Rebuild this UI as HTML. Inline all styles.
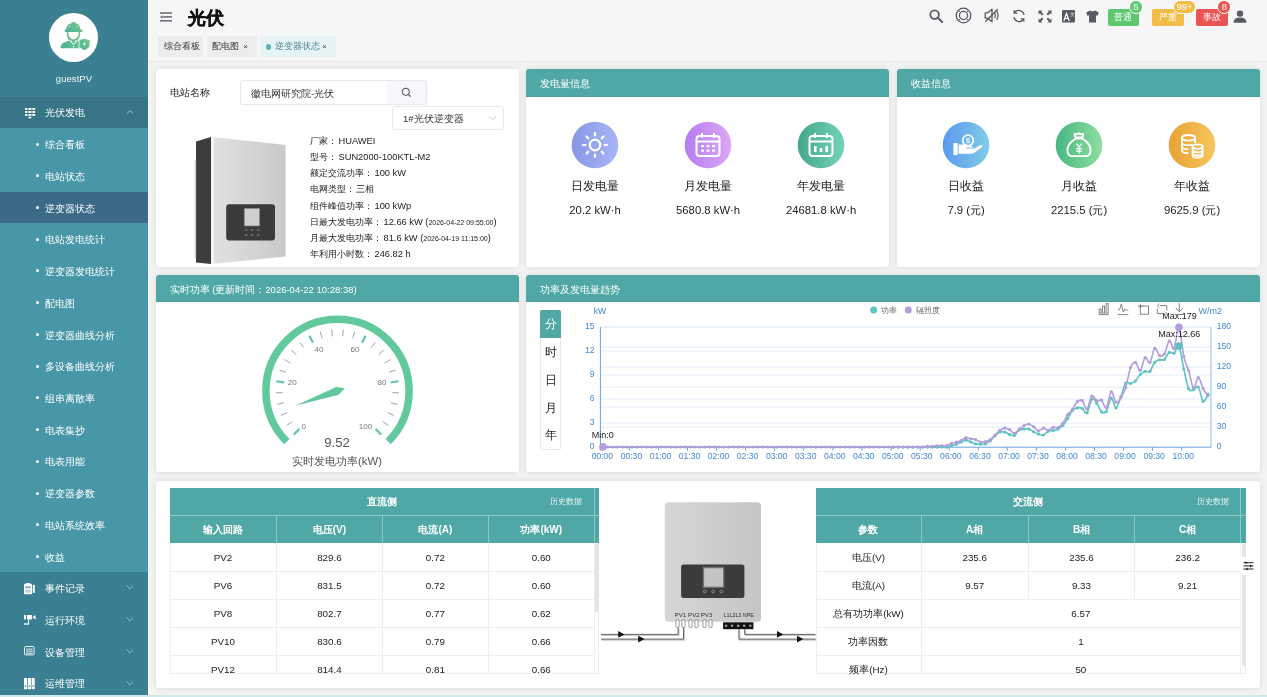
<!DOCTYPE html>
<html><head><meta charset="utf-8">
<style>
*{margin:0;padding:0;box-sizing:border-box}
html,body{width:1267px;height:697px;overflow:hidden;background:#f3f3f3;font-family:"Liberation Sans",sans-serif;color:#333}
.abs{position:absolute}
#side{position:absolute;left:0;top:0;width:148px;height:695px;background:#3b7f92;overflow:visible}
#avatar{position:absolute;left:49px;top:12.8px;width:49px;height:49px;border-radius:50%;background:#fff}
.uname{position:absolute;left:0;width:148px;top:72px;text-align:center;color:#eef5f7;font-size:9.6px;line-height:14px}
.mrow{position:absolute;left:0;width:148px;height:31.7px;color:#fff;font-size:9.5px;line-height:31.7px}
.mrow .t{position:absolute;left:45px;top:0.9px}
.mrow .dot{position:absolute;left:35.5px;top:14.3px;width:3px;height:3px;border-radius:50%;background:#fff}
.chev{position:absolute;left:126px;top:0;width:8px;height:31.7px}
#topbar{position:absolute;left:148px;top:0;width:1119px;height:61.5px;background:#f6f6f6;border-bottom:1px solid #e9e9e9}
.tab{position:absolute;top:36px;height:20.8px;line-height:21.5px;font-size:8.85px;color:#333;background:#ededed;padding-left:6px}
.panel{position:absolute;background:#fff;border-radius:3px;box-shadow:0 0 6px rgba(0,0,0,0.11)}
.ph{position:absolute;left:0;top:0;right:0;height:27.5px;background:#4fa8a5;border-radius:3px 3px 0 0;color:#fff;font-size:9.5px;line-height:30px;padding-left:14px;border-bottom:1px solid #4a9f9c}
.hicon{position:absolute;top:8px}
.badge{position:absolute;top:8.7px;height:16.9px;border-radius:2px;color:#fff;font-size:9px;line-height:17px;text-align:center}
.sup{position:absolute;height:14px;border-radius:7px;border:1px solid #fff;color:#fff;font-size:9.6px;line-height:12.5px;text-align:center}
</style></head><body>
<div id="root" style="position:absolute;left:0;top:0;width:1267px;height:697px;will-change:transform">
<div id="side">
<div id="avatar"><svg width="49" height="49" viewBox="0 0 49 49">
<defs><linearGradient id="wg" x1="0" y1="1" x2="1" y2="0"><stop offset="0" stop-color="#4fb197"/><stop offset="1" stop-color="#74ca86"/></linearGradient></defs>
<g fill="url(#wg)">
<path d="M17.2 16.6 Q17.4 11.4 22.4 10.2 Q22.6 9.1 24.6 9.1 Q26.6 9.1 26.9 10.2 Q31.2 11.4 31.2 16.6 H33.3 V19.1 H15.8 V16.6z"/>
<path d="M17.8 19.1 H19.3 Q19.2 25.8 24.5 26.6 Q29.8 25.8 29.7 19.1 H31.2 Q31.5 25 28.2 27.4 L30.5 28.4 L31.2 28.5 V35.2 H11.5 Q11.3 30.2 17.5 28.6 L20.8 27.4 Q17.5 25 17.8 19.1z"/>
<path d="M30.1 27 Q33.5 26.7 35.4 25.7 Q37.3 26.7 40.7 27 V31 Q40.6 35.3 35.4 37.2 Q30.2 35.3 30.1 31z"/>
</g>
<g fill="#fff">
<path d="M19.8 13.6 l1.2-.9 l.4 1.7z M29 13.6 l-1.2-.9 l-.4 1.7z"/>
<path d="M20.6 27.4 L24 31.7 L24.6 31.5 L21.8 27z M28.4 27.4 L25 31.7 L24.4 31.5 L27.2 27z"/>
<rect x="23.6" y="33.3" width="2" height=".9" rx=".4"/>
<path d="M35.9 28 L33.9 31.4 H35.3 L34.6 33.9 L36.8 30.3 H35.3z"/>
<path d="M29.6 27.2 h.9 v8.5 h-.9z" opacity=".9"/>
</g>
</svg></div>
<div class="uname">guestPV</div>
<div class="mrow" style="top:96.6px;background:#367486"><svg class="abs" style="left:24.7px;top:11.4px" width="11" height="11" viewBox="0 0 11 11" fill="#fff"><rect x="0" y="0" width="2.4" height="1.9"/><rect x="3.3" y="0" width="3.2" height="1.9"/><rect x="7.3" y="0" width="2.9" height="1.9"/><rect x="0" y="3" width="2.4" height="1.9"/><rect x="3.3" y="3" width="3.2" height="1.9"/><rect x="7.3" y="3" width="2.9" height="1.9"/><rect x="0" y="6" width="2.4" height="1.9"/><rect x="3.3" y="6" width="3.2" height="1.9"/><rect x="7.3" y="6" width="2.9" height="1.9"/><rect x="3.3" y="8.8" width="3.2" height="1.4" rx=".6"/></svg><span class="t">光伏发电</span><svg class="chev" viewBox="0 0 8 31.7"><path d="M1.2 16.2 L4 13.6 L6.8 16.2" fill="none" stroke="#a8ccd5" stroke-width="0.9"/></svg></div>
<div class="abs" style="left:0;top:128.2px;width:148px;height:444.2px;background:#4797a8"></div>
<div class="mrow" style="top:128.30px;background:transparent"><span class="dot"></span><span class="t">综合看板</span></div>
<div class="mrow" style="top:160.02px;background:transparent"><span class="dot"></span><span class="t">电站状态</span></div>
<div class="mrow" style="top:191.74px;background:#3b6a88"><span class="dot"></span><span class="t">逆变器状态</span></div>
<div class="mrow" style="top:223.46px;background:transparent"><span class="dot"></span><span class="t">电站发电统计</span></div>
<div class="mrow" style="top:255.18px;background:transparent"><span class="dot"></span><span class="t">逆变器发电统计</span></div>
<div class="mrow" style="top:286.90px;background:transparent"><span class="dot"></span><span class="t">配电图</span></div>
<div class="mrow" style="top:318.62px;background:transparent"><span class="dot"></span><span class="t">逆变器曲线分析</span></div>
<div class="mrow" style="top:350.34px;background:transparent"><span class="dot"></span><span class="t">多设备曲线分析</span></div>
<div class="mrow" style="top:382.06px;background:transparent"><span class="dot"></span><span class="t">组串离散率</span></div>
<div class="mrow" style="top:413.78px;background:transparent"><span class="dot"></span><span class="t">电表集抄</span></div>
<div class="mrow" style="top:445.50px;background:transparent"><span class="dot"></span><span class="t">电表用能</span></div>
<div class="mrow" style="top:477.22px;background:transparent"><span class="dot"></span><span class="t">逆变器参数</span></div>
<div class="mrow" style="top:508.94px;background:transparent"><span class="dot"></span><span class="t">电站系统效率</span></div>
<div class="mrow" style="top:540.66px;background:transparent"><span class="dot"></span><span class="t">收益</span></div>
<div class="mrow" style="top:572.40px"><svg class="abs" style="left:24px;top:11px" width="12" height="12" viewBox="0 0 12 12"><rect x="0" y="0.8" width="8" height="10.4" rx=".6" fill="#fff"/><rect x="2" y="0" width="4" height="1.6" fill="#fff"/><rect x="1.3" y="3" width="5.4" height="2.4" fill="#3b7f92" opacity=".55"/><rect x="1.3" y="6.6" width="5.4" height="3" fill="#3b7f92" opacity=".35"/><rect x="8.8" y="1.9" width="2" height="8" fill="#fff"/></svg><span class="t">事件记录</span><svg class="chev" viewBox="0 0 8 31.7"><path d="M1 13.95 L4 16.75 L6.8 13.95" fill="none" stroke="#a8ccd5" stroke-width="0.9"/></svg></div>
<div class="mrow" style="top:604.12px"><svg class="abs" style="left:24px;top:10.5px" width="12" height="12" viewBox="0 0 12 12" fill="#fff"><rect x="0" y="0" width="1.9" height="4.4"/><rect x="2.9" y="0" width="5" height="4.4"/><path d="M8.4 2.2 L11.6 0 V4.4z"/><rect x="4.1" y="4.4" width="1" height="4.6"/><rect x="0" y="8.3" width="5" height="1.4"/></svg><span class="t">运行环境</span><svg class="chev" viewBox="0 0 8 31.7"><path d="M1 13.95 L4 16.75 L6.8 13.95" fill="none" stroke="#a8ccd5" stroke-width="0.9"/></svg></div>
<div class="mrow" style="top:635.84px"><svg class="abs" style="left:24.3px;top:10.5px" width="11" height="10" viewBox="0 0 11 10" fill="none" stroke="#fff" stroke-width="0.9"><rect x="0.5" y="0.5" width="9.6" height="8.4" rx="1"/><path d="M2 3.2 h6.6 M2 5.2 h6.6 M2 7.2 h6.6"/></svg><span class="t">设备管理</span><svg class="chev" viewBox="0 0 8 31.7"><path d="M1 13.95 L4 16.75 L6.8 13.95" fill="none" stroke="#a8ccd5" stroke-width="0.9"/></svg></div>
<div class="mrow" style="top:667.56px"><svg class="abs" style="left:24.3px;top:10.2px" width="11" height="12" viewBox="0 0 11 12" fill="#fff"><rect x="0" y="0" width="3.1" height="11.3" rx=".4"/><rect x="3.8" y="0" width="3.1" height="11.3" rx=".4"/><rect x="7.6" y="0" width="3.1" height="11.3" rx=".4"/><rect x=".7" y="7.5" width="1.7" height="1.2" fill="#3b7f92"/><rect x="4.5" y="7.5" width="1.7" height="1.2" fill="#3b7f92"/><rect x="8.3" y="7.5" width="1.7" height="1.2" fill="#3b7f92"/></svg><span class="t">运维管理</span><svg class="chev" viewBox="0 0 8 31.7"><path d="M1 13.95 L4 16.75 L6.8 13.95" fill="none" stroke="#a8ccd5" stroke-width="0.9"/></svg></div>
<div class="abs" style="left:148px;top:0;width:1px;height:695px;background:#fbfbfb"></div>
</div>
<div id="topbar">
<svg class="abs" style="left:12px;top:12px" width="12" height="10" viewBox="0 0 12 10"><g fill="#5b5f67"><rect x="0" y="0.3" width="12" height="1.4"/><rect x="3.2" y="4.2" width="8.8" height="1.4"/><rect x="0" y="8.1" width="12" height="1.4"/><path d="M0 4.9 L2.6 3.2 V6.6z"/></g></svg>
<div class="abs" style="left:40.2px;top:4.6px;font-size:18.3px;font-weight:bold;color:#111;line-height:26px;-webkit-text-stroke:0.4px #111">光伏</div>
<div class="tab" style="left:10.2px;width:44.7px">综合看板</div>
<div class="tab" style="left:58.8px;width:49.8px;padding-left:5.5px">配电图<span class="abs" style="left:36.5px;top:0.3px;font-size:8px">×</span></div>
<div class="tab" style="left:112px;width:75.8px;background:#e6f4f5;color:#4f8398;padding-left:14.5px"><span class="abs" style="left:5.6px;top:8px;width:5.6px;height:5.6px;border-radius:50%;background:#5db5b1"></span>逆变器状态<span class="abs" style="left:62px;top:0.3px;font-size:8px;color:#2f4d66">×</span></div>
</div>
<!-- header icons -->
<svg class="abs" style="left:929px;top:9px" width="15" height="14" viewBox="0 0 15 14"><circle cx="5.6" cy="5.6" r="4.3" fill="none" stroke="#565a62" stroke-width="1.8"/><path d="M8.8 8.8 L13.2 13" stroke="#565a62" stroke-width="2" stroke-linecap="round"/></svg>
<svg class="abs" style="left:954.5px;top:7.2px" width="17" height="17" viewBox="0 0 17 17" fill="none" stroke="#565a62"><circle cx="8.5" cy="8.5" r="7.3" stroke-width="1.3"/><circle cx="8.5" cy="8.5" r="4.1" stroke-width="1.3"/><path d="M5.6 5.6 L3.3 3.3 M11.4 5.6 L13.7 3.3 M5.6 11.4 L3.3 13.7 M11.4 11.4 L13.7 13.7" stroke-width="1"/></svg>
<svg class="abs" style="left:984px;top:8px" width="16" height="15" viewBox="0 0 16 15" fill="none" stroke="#565a62" stroke-width="1.3" stroke-linejoin="round"><path d="M1.2 4.8 h2.6 l4.2-3.6 v12.6 l-4.2-3.6 H1.2z"/><path d="M10.6 5 q1.6 2.5 0 5 M12.6 3 q3 4.5 0 9" stroke-width="1.2"/><path d="M1.5 13.5 L13.8 1.3" stroke-width="1.5"/></svg>
<svg class="abs" style="left:1011.5px;top:9px" width="14" height="14" viewBox="0 0 14 14" fill="none" stroke="#565a62" stroke-width="1.3"><path d="M12 6 A5.2 5.2 0 0 0 2.5 3.8"/><path d="M2 8 A5.2 5.2 0 0 0 11.5 10.2"/><path d="M2.2 1.2 v3 h3" /><path d="M11.8 12.8 v-3 h-3"/></svg>
<svg class="abs" style="left:1038px;top:9.5px" width="14" height="13" viewBox="0 0 14 13" fill="#565a62"><path d="M0.5 0.5 h4 l-1.3 1.3 l2.2 2.2 l-1.4 1.4 l-2.2-2.2 l-1.3 1.3z"/><path d="M13.5 0.5 h-4 l1.3 1.3 l-2.2 2.2 l1.4 1.4 l2.2-2.2 l1.3 1.3z"/><path d="M0.5 12.5 h4 l-1.3-1.3 l2.2-2.2 l-1.4-1.4 l-2.2 2.2 l-1.3-1.3z"/><path d="M13.5 12.5 h-4 l1.3-1.3 l-2.2-2.2 l1.4-1.4 l2.2 2.2 l1.3-1.3z"/></svg>
<svg class="abs" style="left:1062px;top:9.5px" width="13" height="13" viewBox="0 0 13 13"><rect x="0" y="0" width="13" height="12.5" rx="1" fill="#565a62"/><path d="M1.8 11 L4.5 3.5 L7.2 11 M2.8 8.5 h3.4" stroke="#fff" stroke-width="1.2" fill="none"/><text x="8" y="5.5" font-size="5" fill="#fff" font-family="Liberation Sans">文</text></svg>
<svg class="abs" style="left:1086px;top:9.5px" width="13" height="13" viewBox="0 0 13 13"><path d="M4 0.5 Q6.5 2.2 9 0.5 L12.8 2.6 L11.6 5.8 L10 5.2 V12.5 H3 V5.2 L1.4 5.8 L0.2 2.6z" fill="#565a62"/></svg>
<div class="badge" style="left:1107.8px;width:31.2px;background:#5ec86f">普通</div>
<div class="sup" style="left:1128.8px;top:0px;width:14.2px;background:#5ec86f">5</div>
<div class="badge" style="left:1152.1px;width:31.7px;background:#f2bd46">严重</div>
<div class="sup" style="left:1172.8px;top:0.4px;width:23.6px;background:#f2bd46">99+</div>
<div class="badge" style="left:1196.1px;width:31.8px;background:#e85552">事故</div>
<div class="sup" style="left:1217.3px;top:0px;width:14.2px;background:#e85552">8</div>
<svg class="abs" style="left:1233px;top:9.5px" width="14" height="13" viewBox="0 0 14 13" fill="#565a62"><circle cx="7" cy="3.6" r="3.2"/><path d="M0.5 12.8 Q0.8 7.6 7 7.6 Q13.2 7.6 13.5 12.8z"/></svg>

<div class="panel" style="left:155.5px;top:69px;width:363px;height:197.5px">
<div class="abs" style="left:14.2px;top:17.0px;font-size:9.6px;line-height:14px;color:#222">电站名称</div>
<div class="abs" style="left:84.8px;top:10.5px;width:147.4px;height:25.6px;border:1px solid #e6e8ee;border-radius:3px 0 0 3px"></div>
<div class="abs" style="left:95.5px;top:17.6px;font-size:9.6px;line-height:14px;color:#333">徽电网研究院-光伏</div>
<div class="abs" style="left:231.7px;top:10.5px;width:39.4px;height:25.6px;border:1px solid #e6e8ee;border-left:none;border-radius:0 3px 3px 0;background:#f5f7fa"></div>
<svg class="abs" style="left:245.5px;top:17.5px" width="11" height="11" viewBox="0 0 11 11"><circle cx="4.8" cy="4.8" r="3.6" fill="none" stroke="#444" stroke-width="1"/><path d="M7.4 7.4 L9.6 9.6" stroke="#444" stroke-width="1.1"/></svg>
<div class="abs" style="left:236.0px;top:36.5px;width:112.9px;height:24.5px;border:1px solid #e6e8ee;border-radius:3px"></div>
<div class="abs" style="left:247.5px;top:42.8px;font-size:9.6px;line-height:14px;color:#333">1#光伏逆变器</div>
<svg class="abs" style="left:332.5px;top:45.5px" width="9" height="6" viewBox="0 0 9 6"><path d="M0.8 1 L4.5 4.6 L8.2 1" fill="none" stroke="#c0c4cc" stroke-width="0.9"/></svg>
<svg class="abs" style="left:37.5px;top:65.0px" width="96" height="132" viewBox="193 134 96 132">
<defs><linearGradient id="invf" x1="0" x2="1"><stop offset="0" stop-color="#e2e2e2"/><stop offset="1" stop-color="#c9c9c9"/></linearGradient></defs>
<path d="M196 141.5 L211 137 L211 264 L196 262.5z" fill="#3c3c3c"/>
<rect x="194.5" y="160" width="1.6" height="98" fill="#d8d8d8"/>
<path d="M211 137 L285.5 145 L285.5 256.5 L211 264z" fill="url(#invf)"/>
<path d="M211 137 L214 137.3 L214 263.7 L211 264z" fill="#f4f4f4"/>
<rect x="226.2" y="204.3" width="48.8" height="36.1" rx="3" fill="#3a3a3a"/>
<rect x="244.2" y="208.3" width="15.5" height="17.7" fill="#cfcfcf" stroke="#777" stroke-width="0.6"/>
<g fill="#666"><rect x="245" y="229" width="2.4" height="2"/><rect x="251" y="229" width="2.4" height="2"/><rect x="257" y="229" width="2.4" height="2"/><rect x="245" y="234" width="2.4" height="2"/><rect x="251" y="234" width="2.4" height="2"/><rect x="257" y="234" width="2.4" height="2"/></g>
</svg><div class="abs" style="left:154.2px;top:64.7px;font-size:9.3px;line-height:14px;white-space:nowrap;color:#222">厂家：<span style="margin-left:1.8px"></span>HUAWEI</div><div class="abs" style="left:154.2px;top:81.1px;font-size:9.3px;line-height:14px;white-space:nowrap;color:#222">型号：<span style="margin-left:1.8px"></span>SUN2000-100KTL-M2</div><div class="abs" style="left:154.2px;top:96.6px;font-size:9.3px;line-height:14px;white-space:nowrap;color:#222">额定交流功率：<span style="margin-left:1.8px"></span>100 kW</div><div class="abs" style="left:154.2px;top:113.1px;font-size:9.3px;line-height:14px;white-space:nowrap;color:#222">电网类型：<span style="margin-left:1.8px"></span>三相</div><div class="abs" style="left:154.2px;top:129.6px;font-size:9.3px;line-height:14px;white-space:nowrap;color:#222">组件峰值功率：<span style="margin-left:1.8px"></span>100 kWp</div><div class="abs" style="left:154.2px;top:145.5px;font-size:9.3px;line-height:14px;white-space:nowrap;color:#222">日最大发电功率：<span style="margin-left:1.8px"></span>12.66 kW (<span style="font-size:7px">2026-04-22 09:55:00</span>)</div><div class="abs" style="left:154.2px;top:161.6px;font-size:9.3px;line-height:14px;white-space:nowrap;color:#222">月最大发电功率：<span style="margin-left:1.8px"></span>81.6 kW (<span style="font-size:7px">2026-04-19 11:15:00</span>)</div><div class="abs" style="left:154.2px;top:177.6px;font-size:9.3px;line-height:14px;white-space:nowrap;color:#222">年利用小时数：<span style="margin-left:1.8px"></span>246.82 h</div>
</div>
<div class="panel" style="left:526.2px;top:69px;width:362.8px;height:197.5px"><div class="ph">发电量信息</div><svg class="abs" style="left:44.9px;top:51.5px" width="48" height="48" viewBox="0 0 48 48"><defs><linearGradient id="g10" x1="0" y1="0" x2="1" y2="0"><stop offset="0" stop-color="#8897e5"/><stop offset="1" stop-color="#a8b5f7"/></linearGradient></defs><circle cx="24" cy="24" r="23.3" fill="url(#g10)"/><g stroke="#fff" stroke-width="2.2" stroke-linecap="round" fill="none"><circle cx="24" cy="24" r="5.3"/><line x1="33.50" y1="24.00" x2="36.00" y2="24.00"/><line x1="30.72" y1="30.72" x2="32.49" y2="32.49"/><line x1="24.00" y1="33.50" x2="24.00" y2="36.00"/><line x1="17.28" y1="30.72" x2="15.51" y2="32.49"/><line x1="14.50" y1="24.00" x2="12.00" y2="24.00"/><line x1="17.28" y1="17.28" x2="15.51" y2="15.51"/><line x1="24.00" y1="14.50" x2="24.00" y2="12.00"/><line x1="30.72" y1="17.28" x2="32.49" y2="15.51"/></g></svg><div class="abs" style="left:8.9px;width:120px;top:110.0px;text-align:center;font-size:11.5px;line-height:15px;color:#222">日发电量</div><div class="abs" style="left:8.9px;width:120px;top:134.3px;text-align:center;font-size:11.3px;line-height:15px;color:#222">20.2 kW·h</div><svg class="abs" style="left:157.9px;top:51.5px" width="48" height="48" viewBox="0 0 48 48"><defs><linearGradient id="g11" x1="0" y1="0" x2="1" y2="0"><stop offset="0" stop-color="#b57cef"/><stop offset="1" stop-color="#dca8f3"/></linearGradient></defs><circle cx="24" cy="24" r="23.3" fill="url(#g11)"/><g fill="none" stroke="#fff" stroke-width="2"><rect x="12.5" y="15" width="23" height="20" rx="3"/><line x1="12.5" y1="20.5" x2="35.5" y2="20.5"/><line x1="18" y1="12" x2="18" y2="17"/><line x1="30" y1="12" x2="30" y2="17"/></g><g fill="#fff"><rect x="17" y="24" width="3" height="2.2"/><rect x="22.5" y="24" width="3" height="2.2"/><rect x="28" y="24" width="3" height="2.2"/><rect x="17" y="28.5" width="3" height="2.2"/><rect x="22.5" y="28.5" width="3" height="2.2"/><rect x="28" y="28.5" width="3" height="2.2"/></g></svg><div class="abs" style="left:121.9px;width:120px;top:110.0px;text-align:center;font-size:11.5px;line-height:15px;color:#222">月发电量</div><div class="abs" style="left:121.9px;width:120px;top:134.3px;text-align:center;font-size:11.3px;line-height:15px;color:#222">5680.8 kW·h</div><svg class="abs" style="left:270.9px;top:51.5px" width="48" height="48" viewBox="0 0 48 48"><defs><linearGradient id="g12" x1="0" y1="0" x2="1" y2="0"><stop offset="0" stop-color="#44a78c"/><stop offset="1" stop-color="#73d3b6"/></linearGradient></defs><circle cx="24" cy="24" r="23.3" fill="url(#g12)"/><g fill="none" stroke="#fff" stroke-width="2"><rect x="12.5" y="15" width="23" height="20" rx="3"/><line x1="12.5" y1="20.5" x2="35.5" y2="20.5"/><line x1="18" y1="12" x2="18" y2="17"/><line x1="30" y1="12" x2="30" y2="17"/></g><g fill="#fff"><rect x="17" y="25" width="2.6" height="6"/><rect x="22.7" y="27" width="2.6" height="4"/><rect x="28.4" y="25" width="2.6" height="6"/></g></svg><div class="abs" style="left:234.9px;width:120px;top:110.0px;text-align:center;font-size:11.5px;line-height:15px;color:#222">年发电量</div><div class="abs" style="left:234.9px;width:120px;top:134.3px;text-align:center;font-size:11.3px;line-height:15px;color:#222">24681.8 kW·h</div></div>
<div class="panel" style="left:897px;top:69px;width:363px;height:197.5px"><div class="ph">收益信息</div><svg class="abs" style="left:45.1px;top:51.5px" width="48" height="48" viewBox="0 0 48 48"><defs><linearGradient id="g20" x1="0" y1="0" x2="1" y2="0"><stop offset="0" stop-color="#5b98f0"/><stop offset="1" stop-color="#80cde8"/></linearGradient></defs><circle cx="24" cy="24" r="23.3" fill="url(#g20)"/><rect x="11.4" y="22" width="4.3" height="12" fill="#fff"/><path d="M16.6 23.6 h4.6 q2.2 0 3.6 1.2 h4.4 q1.8 0 1.8 1.7 h-6.8 v1 h8.2 l5.6-3.2 q1.9-.8 2.4.6 q.3.8-.7 1.5 l-7.4 5.4 q-1.1.9-2.7.9 H16.6z" fill="#fff"/><circle cx="26" cy="19.4" r="5.3" fill="none" stroke="#fff" stroke-width="1.6"/><text x="26" y="22.3" font-size="8" fill="#fff" text-anchor="middle" font-family="Liberation Sans">$</text></svg><div class="abs" style="left:9.1px;width:120px;top:110.0px;text-align:center;font-size:11.5px;line-height:15px;color:#222">日收益</div><div class="abs" style="left:9.1px;width:120px;top:134.3px;text-align:center;font-size:11.3px;line-height:15px;color:#222">7.9 (元)</div><svg class="abs" style="left:158.1px;top:51.5px" width="48" height="48" viewBox="0 0 48 48"><defs><linearGradient id="g21" x1="0" y1="0" x2="1" y2="0"><stop offset="0" stop-color="#48b783"/><stop offset="1" stop-color="#8ddf9f"/></linearGradient></defs><circle cx="24" cy="24" r="23.3" fill="url(#g21)"/><g fill="none" stroke="#fff" stroke-width="1.9" stroke-linejoin="round" stroke-linecap="round"><path d="M20.6 16.4 q-1.8-2.6-.6-3.6 q1.8 1 3.9-.6 q2.1 1.6 3.9.6 q1.2 1-.6 3.6z"/><path d="M20.6 17.6 q-8.2 5.2-8.2 11.6 q0 5.9 5 5.9 h13.2 q5 0 5-5.9 q0-6.4-8.2-11.6z"/></g><g fill="none" stroke="#fff" stroke-width="1.3"><path d="M21.3 22.6 l2.7 3.4 l2.7-3.4 M24 26 v6.2 M21 27.6 h6 M21 30.2 h6"/></g></svg><div class="abs" style="left:122.1px;width:120px;top:110.0px;text-align:center;font-size:11.5px;line-height:15px;color:#222">月收益</div><div class="abs" style="left:122.1px;width:120px;top:134.3px;text-align:center;font-size:11.3px;line-height:15px;color:#222">2215.5 (元)</div><svg class="abs" style="left:271.1px;top:51.5px" width="48" height="48" viewBox="0 0 48 48"><defs><linearGradient id="g22" x1="0" y1="0" x2="1" y2="0"><stop offset="0" stop-color="#e9a134"/><stop offset="1" stop-color="#f6c75c"/></linearGradient></defs><circle cx="24" cy="24" r="23.3" fill="url(#g22)"/><g fill="none" stroke="#fff" stroke-width="1.8"><ellipse cx="20.5" cy="16.8" rx="6.6" ry="2.8"/><path d="M13.9 16.8 v12.6 q0 2.8 6.6 2.8 M27.1 16.8 v5.2 M13.9 21.4 q0 2.8 6.6 2.8 q2.6 0 4.3-.6 M13.9 25.6 q0 2.8 6.6 2.8"/></g><g fill="#f1b84d" stroke="#fff" stroke-width="1.8"><path d="M24.6 25.6 v8.6 q0 2.4 5 2.4 q5 0 5-2.4 v-8.6z"/><ellipse cx="29.6" cy="25.6" rx="5" ry="2.3"/><path d="M24.6 29 q0 2.3 5 2.3 q5 0 5-2.3 M24.6 32.2 q0 2.3 5 2.3 q5 0 5-2.3" fill="none"/></g></svg><div class="abs" style="left:235.1px;width:120px;top:110.0px;text-align:center;font-size:11.5px;line-height:15px;color:#222">年收益</div><div class="abs" style="left:235.1px;width:120px;top:134.3px;text-align:center;font-size:11.3px;line-height:15px;color:#222">9625.9 (元)</div></div>
<div class="panel" style="left:155.5px;top:274.7px;width:363px;height:197.1px"><div class="ph"><span>实时功率 (更新时间：<span style="margin-left:0px">2026-04-22 10:28:38)</span></span></div><svg class="abs" style="left:0;top:0" width="363" height="197"><path d="M130.87 166.53 A71.6 71.6 0 1 1 232.13 166.53" fill="none" stroke="#62c99d" stroke-width="7.5"/><line x1="143.32" y1="154.08" x2="137.80" y2="159.60" stroke="#62c99d" stroke-width="2.2"/><line x1="136.18" y1="146.70" x2="130.55" y2="150.52" stroke="#8a8a8a" stroke-width="0.8"/><line x1="131.21" y1="137.66" x2="124.97" y2="140.36" stroke="#8a8a8a" stroke-width="0.8"/><line x1="128.02" y1="127.85" x2="121.38" y2="129.34" stroke="#8a8a8a" stroke-width="0.8"/><line x1="126.73" y1="117.62" x2="119.93" y2="117.83" stroke="#8a8a8a" stroke-width="0.8"/><line x1="128.16" y1="107.45" x2="120.46" y2="106.23" stroke="#62c99d" stroke-width="2.2"/><line x1="129.94" y1="97.34" x2="123.54" y2="95.03" stroke="#8a8a8a" stroke-width="0.8"/><line x1="134.33" y1="88.00" x2="128.48" y2="84.54" stroke="#8a8a8a" stroke-width="0.8"/><line x1="140.39" y1="79.66" x2="135.29" y2="75.16" stroke="#8a8a8a" stroke-width="0.8"/><line x1="147.91" y1="72.60" x2="143.74" y2="67.23" stroke="#8a8a8a" stroke-width="0.8"/><line x1="156.98" y1="67.79" x2="153.44" y2="60.84" stroke="#62c99d" stroke-width="2.2"/><line x1="166.21" y1="63.28" x2="164.31" y2="56.75" stroke="#8a8a8a" stroke-width="0.8"/><line x1="176.34" y1="61.34" x2="175.70" y2="54.57" stroke="#8a8a8a" stroke-width="0.8"/><line x1="186.66" y1="61.34" x2="187.30" y2="54.57" stroke="#8a8a8a" stroke-width="0.8"/><line x1="196.79" y1="63.28" x2="198.69" y2="56.75" stroke="#8a8a8a" stroke-width="0.8"/><line x1="206.02" y1="67.79" x2="209.56" y2="60.84" stroke="#62c99d" stroke-width="2.2"/><line x1="215.09" y1="72.60" x2="219.26" y2="67.23" stroke="#8a8a8a" stroke-width="0.8"/><line x1="222.61" y1="79.66" x2="227.71" y2="75.16" stroke="#8a8a8a" stroke-width="0.8"/><line x1="228.67" y1="88.00" x2="234.52" y2="84.54" stroke="#8a8a8a" stroke-width="0.8"/><line x1="233.06" y1="97.34" x2="239.46" y2="95.03" stroke="#8a8a8a" stroke-width="0.8"/><line x1="234.84" y1="107.45" x2="242.54" y2="106.23" stroke="#62c99d" stroke-width="2.2"/><line x1="236.27" y1="117.62" x2="243.07" y2="117.83" stroke="#8a8a8a" stroke-width="0.8"/><line x1="234.98" y1="127.85" x2="241.62" y2="129.34" stroke="#8a8a8a" stroke-width="0.8"/><line x1="231.79" y1="137.66" x2="238.03" y2="140.36" stroke="#8a8a8a" stroke-width="0.8"/><line x1="226.82" y1="146.70" x2="232.45" y2="150.52" stroke="#8a8a8a" stroke-width="0.8"/><line x1="219.68" y1="154.08" x2="225.20" y2="159.60" stroke="#62c99d" stroke-width="2.2"/><text x="147.80" y="153.90" font-size="8.1" fill="#777" text-anchor="middle" font-family="Liberation Sans">0</text><text x="136.20" y="110.30" font-size="8.1" fill="#777" text-anchor="middle" font-family="Liberation Sans">20</text><text x="163.10" y="77.20" font-size="8.1" fill="#777" text-anchor="middle" font-family="Liberation Sans">40</text><text x="199.00" y="77.20" font-size="8.1" fill="#777" text-anchor="middle" font-family="Liberation Sans">60</text><text x="226.10" y="110.30" font-size="8.1" fill="#777" text-anchor="middle" font-family="Liberation Sans">80</text><text x="209.50" y="153.90" font-size="8.1" fill="#777" text-anchor="middle" font-family="Liberation Sans">100</text><path d="M188.77 113.36 L182.82 119.68 L139.31 130.67 L180.18 112.12 z" fill="#62c99d"/></svg><div class="abs" style="left:141.5px;width:80px;top:160.1px;text-align:center;font-size:13.2px;line-height:16px;color:#555">9.52</div>
<div class="abs" style="left:111.5px;width:140px;top:179.6px;text-align:center;font-size:11.3px;line-height:15px;color:#555">实时发电功率(kW)</div></div>
<div class="panel" style="left:526.2px;top:274.7px;width:733.8px;height:197.1px"><div class="ph">功率及发电量趋势</div><svg class="abs" style="left:0;top:0" width="734" height="197"><line x1="74.39999999999998" x2="685.0" y1="148.18" y2="148.18" stroke="#e4eef9" stroke-width="1"/><line x1="74.39999999999998" x2="685.0" y1="124.16" y2="124.16" stroke="#e4eef9" stroke-width="1"/><line x1="74.39999999999998" x2="685.0" y1="100.14" y2="100.14" stroke="#e4eef9" stroke-width="1"/><line x1="74.39999999999998" x2="685.0" y1="76.12" y2="76.12" stroke="#e4eef9" stroke-width="1"/><line x1="74.39999999999998" x2="685.0" y1="52.10" y2="52.10" stroke="#e4eef9" stroke-width="1"/><line x1="74.39999999999998" x2="685.0" y1="152.18" y2="152.18" stroke="#e4eef9" stroke-width="1"/><line x1="74.39999999999998" x2="685.0" y1="132.17" y2="132.17" stroke="#e4eef9" stroke-width="1"/><line x1="74.39999999999998" x2="685.0" y1="112.15" y2="112.15" stroke="#e4eef9" stroke-width="1"/><line x1="74.39999999999998" x2="685.0" y1="92.13" y2="92.13" stroke="#e4eef9" stroke-width="1"/><line x1="74.39999999999998" x2="685.0" y1="72.12" y2="72.12" stroke="#e4eef9" stroke-width="1"/><line x1="74.39999999999998" x2="685.0" y1="52.10" y2="52.10" stroke="#e4eef9" stroke-width="1"/><line x1="74.39999999999998" x2="74.39999999999998" y1="52.10000000000002" y2="172.2" stroke="#6aa3dd" stroke-width="1"/><line x1="685.0" x2="685.0" y1="52.10000000000002" y2="172.2" stroke="#8db9e6" stroke-width="1"/><line x1="74.39999999999998" x2="685.0" y1="172.2" y2="172.2" stroke="#6aa3dd" stroke-width="1"/><line x1="74.30" x2="74.30" y1="172.2" y2="175.7" stroke="#6aa3dd" stroke-width="1"/><text x="76.40" y="184.10" font-size="8.6" fill="#4288d0" text-anchor="middle" font-family="Liberation Sans">00:00</text><line x1="103.37" x2="103.37" y1="172.2" y2="175.7" stroke="#6aa3dd" stroke-width="1"/><text x="105.44" y="184.10" font-size="8.6" fill="#4288d0" text-anchor="middle" font-family="Liberation Sans">00:30</text><line x1="132.44" x2="132.44" y1="172.2" y2="175.7" stroke="#6aa3dd" stroke-width="1"/><text x="134.48" y="184.10" font-size="8.6" fill="#4288d0" text-anchor="middle" font-family="Liberation Sans">01:00</text><line x1="161.51" x2="161.51" y1="172.2" y2="175.7" stroke="#6aa3dd" stroke-width="1"/><text x="163.52" y="184.10" font-size="8.6" fill="#4288d0" text-anchor="middle" font-family="Liberation Sans">01:30</text><line x1="190.58" x2="190.58" y1="172.2" y2="175.7" stroke="#6aa3dd" stroke-width="1"/><text x="192.56" y="184.10" font-size="8.6" fill="#4288d0" text-anchor="middle" font-family="Liberation Sans">02:00</text><line x1="219.65" x2="219.65" y1="172.2" y2="175.7" stroke="#6aa3dd" stroke-width="1"/><text x="221.60" y="184.10" font-size="8.6" fill="#4288d0" text-anchor="middle" font-family="Liberation Sans">02:30</text><line x1="248.72" x2="248.72" y1="172.2" y2="175.7" stroke="#6aa3dd" stroke-width="1"/><text x="250.64" y="184.10" font-size="8.6" fill="#4288d0" text-anchor="middle" font-family="Liberation Sans">03:00</text><line x1="277.79" x2="277.79" y1="172.2" y2="175.7" stroke="#6aa3dd" stroke-width="1"/><text x="279.68" y="184.10" font-size="8.6" fill="#4288d0" text-anchor="middle" font-family="Liberation Sans">03:30</text><line x1="306.86" x2="306.86" y1="172.2" y2="175.7" stroke="#6aa3dd" stroke-width="1"/><text x="308.72" y="184.10" font-size="8.6" fill="#4288d0" text-anchor="middle" font-family="Liberation Sans">04:00</text><line x1="335.93" x2="335.93" y1="172.2" y2="175.7" stroke="#6aa3dd" stroke-width="1"/><text x="337.76" y="184.10" font-size="8.6" fill="#4288d0" text-anchor="middle" font-family="Liberation Sans">04:30</text><line x1="365.00" x2="365.00" y1="172.2" y2="175.7" stroke="#6aa3dd" stroke-width="1"/><text x="366.80" y="184.10" font-size="8.6" fill="#4288d0" text-anchor="middle" font-family="Liberation Sans">05:00</text><line x1="394.07" x2="394.07" y1="172.2" y2="175.7" stroke="#6aa3dd" stroke-width="1"/><text x="395.84" y="184.10" font-size="8.6" fill="#4288d0" text-anchor="middle" font-family="Liberation Sans">05:30</text><line x1="423.14" x2="423.14" y1="172.2" y2="175.7" stroke="#6aa3dd" stroke-width="1"/><text x="424.88" y="184.10" font-size="8.6" fill="#4288d0" text-anchor="middle" font-family="Liberation Sans">06:00</text><line x1="452.21" x2="452.21" y1="172.2" y2="175.7" stroke="#6aa3dd" stroke-width="1"/><text x="453.92" y="184.10" font-size="8.6" fill="#4288d0" text-anchor="middle" font-family="Liberation Sans">06:30</text><line x1="481.28" x2="481.28" y1="172.2" y2="175.7" stroke="#6aa3dd" stroke-width="1"/><text x="482.96" y="184.10" font-size="8.6" fill="#4288d0" text-anchor="middle" font-family="Liberation Sans">07:00</text><line x1="510.35" x2="510.35" y1="172.2" y2="175.7" stroke="#6aa3dd" stroke-width="1"/><text x="512.00" y="184.10" font-size="8.6" fill="#4288d0" text-anchor="middle" font-family="Liberation Sans">07:30</text><line x1="539.42" x2="539.42" y1="172.2" y2="175.7" stroke="#6aa3dd" stroke-width="1"/><text x="541.04" y="184.10" font-size="8.6" fill="#4288d0" text-anchor="middle" font-family="Liberation Sans">08:00</text><line x1="568.49" x2="568.49" y1="172.2" y2="175.7" stroke="#6aa3dd" stroke-width="1"/><text x="570.08" y="184.10" font-size="8.6" fill="#4288d0" text-anchor="middle" font-family="Liberation Sans">08:30</text><line x1="597.56" x2="597.56" y1="172.2" y2="175.7" stroke="#6aa3dd" stroke-width="1"/><text x="599.12" y="184.10" font-size="8.6" fill="#4288d0" text-anchor="middle" font-family="Liberation Sans">09:00</text><line x1="626.63" x2="626.63" y1="172.2" y2="175.7" stroke="#6aa3dd" stroke-width="1"/><text x="628.16" y="184.10" font-size="8.6" fill="#4288d0" text-anchor="middle" font-family="Liberation Sans">09:30</text><line x1="655.70" x2="655.70" y1="172.2" y2="175.7" stroke="#6aa3dd" stroke-width="1"/><text x="657.20" y="184.10" font-size="8.6" fill="#4288d0" text-anchor="middle" font-family="Liberation Sans">10:00</text><text x="68.60" y="174.40" font-size="8.6" fill="#4288d0" text-anchor="end" font-family="Liberation Sans">0</text><text x="68.60" y="150.38" font-size="8.6" fill="#4288d0" text-anchor="end" font-family="Liberation Sans">3</text><text x="68.60" y="126.36" font-size="8.6" fill="#4288d0" text-anchor="end" font-family="Liberation Sans">6</text><text x="68.60" y="102.34" font-size="8.6" fill="#4288d0" text-anchor="end" font-family="Liberation Sans">9</text><text x="68.60" y="78.32" font-size="8.6" fill="#4288d0" text-anchor="end" font-family="Liberation Sans">12</text><text x="68.60" y="54.30" font-size="8.6" fill="#4288d0" text-anchor="end" font-family="Liberation Sans">15</text><text x="690.80" y="174.40" font-size="8.6" fill="#4288d0" font-family="Liberation Sans">0</text><text x="690.80" y="154.38" font-size="8.6" fill="#4288d0" font-family="Liberation Sans">30</text><text x="690.80" y="134.37" font-size="8.6" fill="#4288d0" font-family="Liberation Sans">60</text><text x="690.80" y="114.35" font-size="8.6" fill="#4288d0" font-family="Liberation Sans">90</text><text x="690.80" y="94.33" font-size="8.6" fill="#4288d0" font-family="Liberation Sans">120</text><text x="690.80" y="74.32" font-size="8.6" fill="#4288d0" font-family="Liberation Sans">150</text><text x="690.80" y="54.30" font-size="8.6" fill="#4288d0" font-family="Liberation Sans">180</text><text x="67.80" y="39.10" font-size="8.6" fill="#4288d0" font-family="Liberation Sans">kW</text><text x="672.60" y="39.30" font-size="9" fill="#4288d0" font-family="Liberation Sans">W/m2</text><path d="M77.00 172.10C77.87 172.10 80.10 172.10 81.84 172.10C83.58 172.10 84.94 172.10 86.68 172.10C88.42 172.10 89.78 172.10 91.52 172.10C93.26 172.10 94.62 172.10 96.36 172.10C98.10 172.10 99.46 172.10 101.20 172.10C102.94 172.10 104.30 172.10 106.04 172.10C107.78 172.10 109.14 172.10 110.88 172.10C112.62 172.10 113.98 172.10 115.72 172.10C117.46 172.10 118.82 172.10 120.56 172.10C122.30 172.10 123.66 172.10 125.40 172.10C127.14 172.10 128.50 172.10 130.24 172.10C131.98 172.10 133.34 172.10 135.08 172.10C136.82 172.10 138.18 172.10 139.92 172.10C141.66 172.10 143.02 172.10 144.76 172.10C146.50 172.10 147.86 172.10 149.60 172.10C151.34 172.10 152.70 172.10 154.44 172.10C156.18 172.10 157.54 172.10 159.28 172.10C161.02 172.10 162.38 172.10 164.12 172.10C165.86 172.10 167.22 172.10 168.96 172.10C170.70 172.10 172.06 172.10 173.80 172.10C175.54 172.10 176.90 172.10 178.64 172.10C180.38 172.10 181.74 172.10 183.48 172.10C185.22 172.10 186.58 172.10 188.32 172.10C190.06 172.10 191.42 172.10 193.16 172.10C194.90 172.10 196.26 172.10 198.00 172.10C199.74 172.10 201.10 172.10 202.84 172.10C204.58 172.10 205.94 172.10 207.68 172.10C209.42 172.10 210.78 172.10 212.52 172.10C214.26 172.10 215.62 172.10 217.36 172.10C219.10 172.10 220.46 172.10 222.20 172.10C223.94 172.10 225.30 172.10 227.04 172.10C228.78 172.10 230.14 172.10 231.88 172.10C233.62 172.10 234.98 172.10 236.72 172.10C238.46 172.10 239.82 172.10 241.56 172.10C243.30 172.10 244.66 172.10 246.40 172.10C248.14 172.10 249.50 172.10 251.24 172.10C252.98 172.10 254.34 172.10 256.08 172.10C257.82 172.10 259.18 172.10 260.92 172.10C262.66 172.10 264.02 172.10 265.76 172.10C267.50 172.10 268.86 172.10 270.60 172.10C272.34 172.10 273.70 172.10 275.44 172.10C277.18 172.10 278.54 172.10 280.28 172.10C282.02 172.10 283.38 172.10 285.12 172.10C286.86 172.10 288.22 172.10 289.96 172.10C291.70 172.10 293.06 172.10 294.80 172.10C296.54 172.10 297.90 172.10 299.64 172.10C301.38 172.10 302.74 172.10 304.48 172.10C306.22 172.10 307.58 172.10 309.32 172.10C311.06 172.10 312.42 172.10 314.16 172.10C315.90 172.10 317.26 172.10 319.00 172.10C320.74 172.10 322.10 172.10 323.84 172.10C325.58 172.10 326.94 172.10 328.68 172.10C330.42 172.10 331.78 172.10 333.52 172.10C335.26 172.10 336.62 172.10 338.36 172.10C340.10 172.10 341.46 172.10 343.20 172.10C344.94 172.10 346.30 172.10 348.04 172.10C349.78 172.10 351.14 172.10 352.88 172.10C354.62 172.10 355.98 172.10 357.72 172.10C359.46 172.10 360.82 172.10 362.56 172.10C364.30 172.10 365.66 172.10 367.40 172.10C369.14 172.10 370.50 172.10 372.24 172.10C373.98 172.10 375.34 172.10 377.08 172.10C378.82 172.10 380.18 172.10 381.92 172.10C383.66 172.10 385.02 172.10 386.76 172.10C388.50 172.10 389.86 172.10 391.60 172.10C393.34 172.10 394.70 172.10 396.44 172.10C398.18 172.10 399.54 172.10 401.28 172.10C403.02 172.10 404.38 172.10 406.12 172.10C407.86 172.10 409.22 172.10 410.96 172.10C412.70 172.10 414.06 172.10 415.80 172.10C417.54 172.10 418.90 172.33 420.64 172.10C422.38 171.87 423.74 171.32 425.48 170.80C427.22 170.28 428.58 169.88 430.32 169.20C432.06 168.52 433.42 167.74 435.16 167.00C436.90 166.26 438.26 165.10 440.00 165.10C441.74 165.10 443.10 166.32 444.84 167.00C446.58 167.68 447.94 168.50 449.68 168.90C451.42 169.30 452.78 169.20 454.52 169.20C456.26 169.20 457.62 169.48 459.36 168.90C461.10 168.32 462.46 167.48 464.20 166.00C465.94 164.52 467.30 162.34 469.04 160.70C470.78 159.06 472.14 157.55 473.88 156.90C475.62 156.25 476.98 156.65 478.72 157.10C480.46 157.55 481.82 158.81 483.56 159.40C485.30 159.99 486.66 161.19 488.40 160.40C490.14 159.61 491.50 156.13 493.24 155.00C494.98 153.87 496.34 154.26 498.08 154.10C499.82 153.94 501.18 153.60 502.92 154.10C504.66 154.60 506.02 156.00 507.76 156.90C509.50 157.80 510.86 158.54 512.60 159.10C514.34 159.66 515.70 160.52 517.44 160.00C519.18 159.48 520.54 157.01 522.28 156.20C524.02 155.39 525.38 155.88 527.12 155.50C528.86 155.12 530.22 155.00 531.96 154.10C533.70 153.20 535.06 152.37 536.80 150.50C538.54 148.63 539.90 146.42 541.64 143.70C543.38 140.98 544.74 137.34 546.48 135.40C548.22 133.46 549.58 133.28 551.32 132.90C553.06 132.52 554.42 132.40 556.16 133.30C557.90 134.20 559.26 139.56 561.00 137.90C562.74 136.24 564.10 125.90 565.84 124.10C567.58 122.30 568.94 125.60 570.68 127.90C572.42 130.20 573.78 135.39 575.52 136.90C577.26 138.41 578.62 138.77 580.36 136.30C582.10 133.83 583.46 123.81 585.20 123.20C586.94 122.59 588.30 133.13 590.04 132.90C591.78 132.67 593.14 126.38 594.88 121.90C596.62 117.42 597.98 110.41 599.72 108.00C601.46 105.59 602.82 108.86 604.56 108.50C606.30 108.14 607.66 107.62 609.40 106.00C611.14 104.38 612.50 101.25 614.24 99.50C615.98 97.75 617.34 96.88 619.08 96.30C620.82 95.72 622.18 97.92 623.92 96.30C625.66 94.68 627.02 89.37 628.76 87.30C630.50 85.23 631.86 85.30 633.60 84.80C635.34 84.30 636.70 85.83 638.44 84.50C640.18 83.17 641.54 78.53 643.28 77.40C645.02 76.27 646.38 79.39 648.12 78.20C649.86 77.01 651.22 67.96 652.96 70.80C654.70 73.64 656.06 86.28 657.80 94.00C659.54 101.72 660.90 109.96 662.64 113.70C664.38 117.44 665.74 115.09 667.48 114.80C669.22 114.51 670.58 110.03 672.32 112.10C674.06 114.17 675.42 125.02 677.16 126.30C678.90 127.58 681.13 120.48 682.00 119.20" fill="none" stroke="#5ec4c1" stroke-width="1.6"/><g fill="#5ec4c1"><circle cx="367.40" cy="172.10" r="1.6"/><circle cx="372.24" cy="172.10" r="1.6"/><circle cx="377.08" cy="172.10" r="1.6"/><circle cx="381.92" cy="172.10" r="1.6"/><circle cx="386.76" cy="172.10" r="1.6"/><circle cx="391.60" cy="172.10" r="1.6"/><circle cx="396.44" cy="172.10" r="1.6"/><circle cx="401.28" cy="172.10" r="1.6"/><circle cx="406.12" cy="172.10" r="1.6"/><circle cx="410.96" cy="172.10" r="1.6"/><circle cx="415.80" cy="172.10" r="1.6"/><circle cx="420.64" cy="172.10" r="1.6"/><circle cx="425.48" cy="170.80" r="1.6"/><circle cx="430.32" cy="169.20" r="1.6"/><circle cx="435.16" cy="167.00" r="1.6"/><circle cx="440.00" cy="165.10" r="1.6"/><circle cx="444.84" cy="167.00" r="1.6"/><circle cx="449.68" cy="168.90" r="1.6"/><circle cx="454.52" cy="169.20" r="1.6"/><circle cx="459.36" cy="168.90" r="1.6"/><circle cx="464.20" cy="166.00" r="1.6"/><circle cx="469.04" cy="160.70" r="1.6"/><circle cx="473.88" cy="156.90" r="1.6"/><circle cx="478.72" cy="157.10" r="1.6"/><circle cx="483.56" cy="159.40" r="1.6"/><circle cx="488.40" cy="160.40" r="1.6"/><circle cx="493.24" cy="155.00" r="1.6"/><circle cx="498.08" cy="154.10" r="1.6"/><circle cx="502.92" cy="154.10" r="1.6"/><circle cx="507.76" cy="156.90" r="1.6"/><circle cx="512.60" cy="159.10" r="1.6"/><circle cx="517.44" cy="160.00" r="1.6"/><circle cx="522.28" cy="156.20" r="1.6"/><circle cx="527.12" cy="155.50" r="1.6"/><circle cx="531.96" cy="154.10" r="1.6"/><circle cx="536.80" cy="150.50" r="1.6"/><circle cx="541.64" cy="143.70" r="1.6"/><circle cx="546.48" cy="135.40" r="1.6"/><circle cx="551.32" cy="132.90" r="1.6"/><circle cx="556.16" cy="133.30" r="1.6"/><circle cx="561.00" cy="137.90" r="1.6"/><circle cx="565.84" cy="124.10" r="1.6"/><circle cx="570.68" cy="127.90" r="1.6"/><circle cx="575.52" cy="136.90" r="1.6"/><circle cx="580.36" cy="136.30" r="1.6"/><circle cx="585.20" cy="123.20" r="1.6"/><circle cx="590.04" cy="132.90" r="1.6"/><circle cx="594.88" cy="121.90" r="1.6"/><circle cx="599.72" cy="108.00" r="1.6"/><circle cx="604.56" cy="108.50" r="1.6"/><circle cx="609.40" cy="106.00" r="1.6"/><circle cx="614.24" cy="99.50" r="1.6"/><circle cx="619.08" cy="96.30" r="1.6"/><circle cx="623.92" cy="96.30" r="1.6"/><circle cx="628.76" cy="87.30" r="1.6"/><circle cx="633.60" cy="84.80" r="1.6"/><circle cx="638.44" cy="84.50" r="1.6"/><circle cx="643.28" cy="77.40" r="1.6"/><circle cx="648.12" cy="78.20" r="1.6"/><circle cx="652.96" cy="70.80" r="1.6"/><circle cx="657.80" cy="94.00" r="1.6"/><circle cx="662.64" cy="113.70" r="1.6"/><circle cx="667.48" cy="114.80" r="1.6"/><circle cx="672.32" cy="112.10" r="1.6"/><circle cx="677.16" cy="126.30" r="1.6"/><circle cx="682.00" cy="119.20" r="1.6"/></g><path d="M77.00 172.00C77.87 172.00 80.10 172.00 81.84 172.00C83.58 172.00 84.94 172.00 86.68 172.00C88.42 172.00 89.78 172.00 91.52 172.00C93.26 172.00 94.62 172.00 96.36 172.00C98.10 172.00 99.46 172.00 101.20 172.00C102.94 172.00 104.30 172.00 106.04 172.00C107.78 172.00 109.14 172.00 110.88 172.00C112.62 172.00 113.98 172.00 115.72 172.00C117.46 172.00 118.82 172.00 120.56 172.00C122.30 172.00 123.66 172.00 125.40 172.00C127.14 172.00 128.50 172.00 130.24 172.00C131.98 172.00 133.34 172.00 135.08 172.00C136.82 172.00 138.18 172.00 139.92 172.00C141.66 172.00 143.02 172.00 144.76 172.00C146.50 172.00 147.86 172.00 149.60 172.00C151.34 172.00 152.70 172.00 154.44 172.00C156.18 172.00 157.54 172.00 159.28 172.00C161.02 172.00 162.38 172.00 164.12 172.00C165.86 172.00 167.22 172.00 168.96 172.00C170.70 172.00 172.06 172.00 173.80 172.00C175.54 172.00 176.90 172.00 178.64 172.00C180.38 172.00 181.74 172.00 183.48 172.00C185.22 172.00 186.58 172.00 188.32 172.00C190.06 172.00 191.42 172.00 193.16 172.00C194.90 172.00 196.26 172.00 198.00 172.00C199.74 172.00 201.10 172.00 202.84 172.00C204.58 172.00 205.94 172.00 207.68 172.00C209.42 172.00 210.78 172.00 212.52 172.00C214.26 172.00 215.62 172.00 217.36 172.00C219.10 172.00 220.46 172.00 222.20 172.00C223.94 172.00 225.30 172.00 227.04 172.00C228.78 172.00 230.14 172.00 231.88 172.00C233.62 172.00 234.98 172.00 236.72 172.00C238.46 172.00 239.82 172.00 241.56 172.00C243.30 172.00 244.66 172.00 246.40 172.00C248.14 172.00 249.50 172.00 251.24 172.00C252.98 172.00 254.34 172.00 256.08 172.00C257.82 172.00 259.18 172.00 260.92 172.00C262.66 172.00 264.02 172.00 265.76 172.00C267.50 172.00 268.86 172.00 270.60 172.00C272.34 172.00 273.70 172.00 275.44 172.00C277.18 172.00 278.54 172.00 280.28 172.00C282.02 172.00 283.38 172.00 285.12 172.00C286.86 172.00 288.22 172.00 289.96 172.00C291.70 172.00 293.06 172.00 294.80 172.00C296.54 172.00 297.90 172.00 299.64 172.00C301.38 172.00 302.74 172.00 304.48 172.00C306.22 172.00 307.58 172.00 309.32 172.00C311.06 172.00 312.42 172.00 314.16 172.00C315.90 172.00 317.26 172.00 319.00 172.00C320.74 172.00 322.10 172.00 323.84 172.00C325.58 172.00 326.94 172.00 328.68 172.00C330.42 172.00 331.78 172.00 333.52 172.00C335.26 172.00 336.62 172.00 338.36 172.00C340.10 172.00 341.46 172.00 343.20 172.00C344.94 172.00 346.30 172.00 348.04 172.00C349.78 172.00 351.14 172.00 352.88 172.00C354.62 172.00 355.98 172.00 357.72 172.00C359.46 172.00 360.82 172.00 362.56 172.00C364.30 172.00 365.66 172.00 367.40 172.00C369.14 172.00 370.50 172.00 372.24 172.00C373.98 172.00 375.34 172.00 377.08 172.00C378.82 172.00 380.18 172.00 381.92 172.00C383.66 172.00 385.02 172.00 386.76 172.00C388.50 172.00 389.86 172.00 391.60 172.00C393.34 172.00 394.70 172.11 396.44 172.00C398.18 171.89 399.54 171.53 401.28 171.40C403.02 171.27 404.38 171.41 406.12 171.30C407.86 171.19 409.22 170.91 410.96 170.80C412.70 170.69 414.06 170.75 415.80 170.70C417.54 170.65 418.90 170.90 420.64 170.50C422.38 170.10 423.74 169.09 425.48 168.50C427.22 167.91 428.58 167.74 430.32 167.20C432.06 166.66 433.42 166.35 435.16 165.50C436.90 164.65 438.26 162.81 440.00 162.50C441.74 162.19 443.10 163.40 444.84 163.80C446.58 164.20 447.94 164.12 449.68 164.70C451.42 165.28 452.78 166.64 454.52 167.00C456.26 167.36 457.62 167.11 459.36 166.70C461.10 166.29 462.46 165.91 464.20 164.70C465.94 163.49 467.30 161.69 469.04 160.00C470.78 158.31 472.14 156.54 473.88 155.30C475.62 154.06 476.98 153.23 478.72 153.10C480.46 152.97 481.82 153.65 483.56 154.60C485.30 155.55 486.66 158.49 488.40 158.40C490.14 158.31 491.50 155.50 493.24 154.10C494.98 152.70 496.34 151.52 498.08 150.60C499.82 149.68 501.18 148.78 502.92 149.00C504.66 149.22 506.02 150.56 507.76 151.80C509.50 153.04 510.86 155.67 512.60 155.90C514.34 156.13 515.70 153.21 517.44 153.10C519.18 152.99 520.54 155.44 522.28 155.30C524.02 155.16 525.38 152.80 527.12 152.30C528.86 151.80 530.22 153.22 531.96 152.50C533.70 151.78 535.06 150.60 536.80 148.30C538.54 146.00 539.90 142.20 541.64 139.70C543.38 137.20 544.74 136.74 546.48 134.40C548.22 132.06 549.58 128.27 551.32 126.70C553.06 125.13 554.42 124.39 556.16 125.70C557.90 127.01 559.26 134.83 561.00 134.00C562.74 133.17 564.10 122.59 565.84 121.10C567.58 119.61 568.94 124.96 570.68 125.70C572.42 126.44 573.78 123.96 575.52 125.20C577.26 126.44 578.62 134.11 580.36 132.60C582.10 131.09 583.46 117.77 585.20 116.80C586.94 115.83 588.30 126.17 590.04 127.20C591.78 128.23 593.14 125.15 594.88 122.50C596.62 119.85 597.98 117.90 599.72 112.50C601.46 107.10 602.82 97.00 604.56 92.50C606.30 88.00 607.66 86.96 609.40 87.50C611.14 88.04 612.50 96.38 614.24 95.50C615.98 94.62 617.34 84.02 619.08 82.60C620.82 81.18 622.18 89.26 623.92 87.60C625.66 85.94 627.02 74.68 628.76 73.40C630.50 72.12 631.86 79.49 633.60 80.50C635.34 81.51 636.70 81.63 638.44 79.00C640.18 76.37 641.54 66.91 643.28 65.90C645.02 64.89 646.38 75.88 648.12 73.40C649.86 70.92 651.22 50.68 652.96 52.10C654.70 53.52 656.06 73.49 657.80 81.30C659.54 89.11 660.90 89.81 662.64 95.50C664.38 101.19 665.74 111.62 667.48 112.90C669.22 114.18 670.58 102.46 672.32 102.60C674.06 102.74 675.42 110.42 677.16 113.70C678.90 116.98 681.13 119.52 682.00 120.80" fill="none" stroke="#b39ddb" stroke-width="1.6"/><g fill="#b39ddb"><circle cx="77.00" cy="172.00" r="1.6"/><circle cx="81.84" cy="172.00" r="1.6"/><circle cx="86.68" cy="172.00" r="1.6"/><circle cx="91.52" cy="172.00" r="1.6"/><circle cx="96.36" cy="172.00" r="1.6"/><circle cx="101.20" cy="172.00" r="1.6"/><circle cx="106.04" cy="172.00" r="1.6"/><circle cx="110.88" cy="172.00" r="1.6"/><circle cx="115.72" cy="172.00" r="1.6"/><circle cx="120.56" cy="172.00" r="1.6"/><circle cx="125.40" cy="172.00" r="1.6"/><circle cx="130.24" cy="172.00" r="1.6"/><circle cx="135.08" cy="172.00" r="1.6"/><circle cx="139.92" cy="172.00" r="1.6"/><circle cx="144.76" cy="172.00" r="1.6"/><circle cx="149.60" cy="172.00" r="1.6"/><circle cx="154.44" cy="172.00" r="1.6"/><circle cx="159.28" cy="172.00" r="1.6"/><circle cx="164.12" cy="172.00" r="1.6"/><circle cx="168.96" cy="172.00" r="1.6"/><circle cx="173.80" cy="172.00" r="1.6"/><circle cx="178.64" cy="172.00" r="1.6"/><circle cx="183.48" cy="172.00" r="1.6"/><circle cx="188.32" cy="172.00" r="1.6"/><circle cx="193.16" cy="172.00" r="1.6"/><circle cx="198.00" cy="172.00" r="1.6"/><circle cx="202.84" cy="172.00" r="1.6"/><circle cx="207.68" cy="172.00" r="1.6"/><circle cx="212.52" cy="172.00" r="1.6"/><circle cx="217.36" cy="172.00" r="1.6"/><circle cx="222.20" cy="172.00" r="1.6"/><circle cx="227.04" cy="172.00" r="1.6"/><circle cx="231.88" cy="172.00" r="1.6"/><circle cx="236.72" cy="172.00" r="1.6"/><circle cx="241.56" cy="172.00" r="1.6"/><circle cx="246.40" cy="172.00" r="1.6"/><circle cx="251.24" cy="172.00" r="1.6"/><circle cx="256.08" cy="172.00" r="1.6"/><circle cx="260.92" cy="172.00" r="1.6"/><circle cx="265.76" cy="172.00" r="1.6"/><circle cx="270.60" cy="172.00" r="1.6"/><circle cx="275.44" cy="172.00" r="1.6"/><circle cx="280.28" cy="172.00" r="1.6"/><circle cx="285.12" cy="172.00" r="1.6"/><circle cx="289.96" cy="172.00" r="1.6"/><circle cx="294.80" cy="172.00" r="1.6"/><circle cx="299.64" cy="172.00" r="1.6"/><circle cx="304.48" cy="172.00" r="1.6"/><circle cx="309.32" cy="172.00" r="1.6"/><circle cx="314.16" cy="172.00" r="1.6"/><circle cx="319.00" cy="172.00" r="1.6"/><circle cx="323.84" cy="172.00" r="1.6"/><circle cx="328.68" cy="172.00" r="1.6"/><circle cx="333.52" cy="172.00" r="1.6"/><circle cx="338.36" cy="172.00" r="1.6"/><circle cx="343.20" cy="172.00" r="1.6"/><circle cx="348.04" cy="172.00" r="1.6"/><circle cx="352.88" cy="172.00" r="1.6"/><circle cx="357.72" cy="172.00" r="1.6"/><circle cx="362.56" cy="172.00" r="1.6"/><circle cx="367.40" cy="172.00" r="1.6"/><circle cx="372.24" cy="172.00" r="1.6"/><circle cx="377.08" cy="172.00" r="1.6"/><circle cx="381.92" cy="172.00" r="1.6"/><circle cx="386.76" cy="172.00" r="1.6"/><circle cx="391.60" cy="172.00" r="1.6"/><circle cx="396.44" cy="172.00" r="1.6"/><circle cx="401.28" cy="171.40" r="1.6"/><circle cx="406.12" cy="171.30" r="1.6"/><circle cx="410.96" cy="170.80" r="1.6"/><circle cx="415.80" cy="170.70" r="1.6"/><circle cx="420.64" cy="170.50" r="1.6"/><circle cx="425.48" cy="168.50" r="1.6"/><circle cx="430.32" cy="167.20" r="1.6"/><circle cx="435.16" cy="165.50" r="1.6"/><circle cx="440.00" cy="162.50" r="1.6"/><circle cx="444.84" cy="163.80" r="1.6"/><circle cx="449.68" cy="164.70" r="1.6"/><circle cx="454.52" cy="167.00" r="1.6"/><circle cx="459.36" cy="166.70" r="1.6"/><circle cx="464.20" cy="164.70" r="1.6"/><circle cx="469.04" cy="160.00" r="1.6"/><circle cx="473.88" cy="155.30" r="1.6"/><circle cx="478.72" cy="153.10" r="1.6"/><circle cx="483.56" cy="154.60" r="1.6"/><circle cx="488.40" cy="158.40" r="1.6"/><circle cx="493.24" cy="154.10" r="1.6"/><circle cx="498.08" cy="150.60" r="1.6"/><circle cx="502.92" cy="149.00" r="1.6"/><circle cx="507.76" cy="151.80" r="1.6"/><circle cx="512.60" cy="155.90" r="1.6"/><circle cx="517.44" cy="153.10" r="1.6"/><circle cx="522.28" cy="155.30" r="1.6"/><circle cx="527.12" cy="152.30" r="1.6"/><circle cx="531.96" cy="152.50" r="1.6"/><circle cx="536.80" cy="148.30" r="1.6"/><circle cx="541.64" cy="139.70" r="1.6"/><circle cx="546.48" cy="134.40" r="1.6"/><circle cx="551.32" cy="126.70" r="1.6"/><circle cx="556.16" cy="125.70" r="1.6"/><circle cx="561.00" cy="134.00" r="1.6"/><circle cx="565.84" cy="121.10" r="1.6"/><circle cx="570.68" cy="125.70" r="1.6"/><circle cx="575.52" cy="125.20" r="1.6"/><circle cx="580.36" cy="132.60" r="1.6"/><circle cx="585.20" cy="116.80" r="1.6"/><circle cx="590.04" cy="127.20" r="1.6"/><circle cx="594.88" cy="122.50" r="1.6"/><circle cx="599.72" cy="112.50" r="1.6"/><circle cx="604.56" cy="92.50" r="1.6"/><circle cx="609.40" cy="87.50" r="1.6"/><circle cx="614.24" cy="95.50" r="1.6"/><circle cx="619.08" cy="82.60" r="1.6"/><circle cx="623.92" cy="87.60" r="1.6"/><circle cx="628.76" cy="73.40" r="1.6"/><circle cx="633.60" cy="80.50" r="1.6"/><circle cx="638.44" cy="79.00" r="1.6"/><circle cx="643.28" cy="65.90" r="1.6"/><circle cx="648.12" cy="73.40" r="1.6"/><circle cx="652.96" cy="52.10" r="1.6"/><circle cx="657.80" cy="81.30" r="1.6"/><circle cx="662.64" cy="95.50" r="1.6"/><circle cx="667.48" cy="112.90" r="1.6"/><circle cx="672.32" cy="102.60" r="1.6"/><circle cx="677.16" cy="113.70" r="1.6"/><circle cx="682.00" cy="120.80" r="1.6"/></g><circle cx="77.00" cy="171.90" r="3.8" fill="#b39ddb"/><circle cx="652.96" cy="52.30" r="3.8" fill="#b39ddb"/><circle cx="652.96" cy="71.10" r="3.8" fill="#5ec4c1"/><text x="65.80" y="163.10" font-size="9" fill="#222" font-family="Liberation Sans">Min:0</text><text x="636.20" y="44.30" font-size="9" fill="#222" font-family="Liberation Sans">Max:179</text><text x="632.30" y="62.20" font-size="9" fill="#222" font-family="Liberation Sans">Max:12.66</text><circle cx="347.70" cy="34.90" r="3.5" fill="#5ec4c1"/><text x="354.70" y="37.90" font-size="8.1" fill="#666" font-family="Liberation Sans">功率</text><circle cx="382.30" cy="34.90" r="3.5" fill="#b39ddb"/><text x="389.60" y="37.90" font-size="8.1" fill="#666" font-family="Liberation Sans">辐照度</text><g transform="translate(572.60,28.10)" fill="none" stroke="#777" stroke-width="0.9"><path d="M0 11.5 h10.2"/><rect x="0.5" y="6" width="2" height="4"/><rect x="4" y="3" width="2" height="7"/><rect x="7.5" y="0.5" width="2" height="9.5"/></g><g transform="translate(591.80,28.10)" fill="none" stroke="#777" stroke-width="0.9"><path d="M0 11.5 h10.5"/><path d="M0 7 l2 -1 l1.5 -5 l2 8 l1.5 -3 l1.5 1 h2"/></g><g transform="translate(611.80,28.10)" fill="none" stroke="#777" stroke-width="0.9"><rect x="2.5" y="3" width="8.2" height="8.1"/><path d="M0 3 h5 M2.5 1.2 v4"/></g><g transform="translate(630.80,28.10)" fill="none" stroke="#777" stroke-width="0.9"><path d="M3 2.5 h7 v5 M2.5 0.5 l-2 2 l2 2 M7.5 10.5 h-7 v-5 M8 8.5 l2 2 l-2 2"/></g><g transform="translate(648.80,28.10)" fill="none" stroke="#777" stroke-width="0.9"><path d="M4.5 0 v8.5 M1 5 l3.5 3.5 l3.5 -3.5 M0 11.5 h9"/></g></svg><div class="abs" style="left:14.3px;top:35.1px;width:20.7px;height:140.2px;border:1px solid #e8e8e8;border-radius:2px;box-shadow:0 0 2px rgba(0,0,0,.06)"></div>
<div class="abs" style="left:14.3px;top:35.1px;width:20.7px;height:28px;background:#4fa8a5;border-radius:2px 2px 0 0;color:#fff;font-size:11.5px;line-height:28px;text-align:center">分</div><div class="abs" style="left:14.3px;top:63.3px;width:20.7px;height:28px;color:#222;font-size:11.5px;line-height:28px;text-align:center">时</div><div class="abs" style="left:14.3px;top:91.8px;width:20.7px;height:28px;color:#222;font-size:11.5px;line-height:28px;text-align:center">日</div><div class="abs" style="left:14.3px;top:119.8px;width:20.7px;height:28px;color:#222;font-size:11.5px;line-height:28px;text-align:center">月</div><div class="abs" style="left:14.3px;top:146.7px;width:20.7px;height:28px;color:#222;font-size:11.5px;line-height:28px;text-align:center">年</div></div>
<div class="panel" style="left:155.5px;top:480.5px;width:1104.5px;height:207.5px"><div class="abs" style="left:14.0px;top:7.5px;width:429.8px;height:55.0px;background:#4fa8a5"></div><div class="abs" style="left:14.0px;top:34.3px;width:429.8px;height:1px;background:#8cc9c6"></div><div class="abs" style="left:120.3px;top:34.8px;width:1px;height:27.7px;background:#8cc9c6"></div><div class="abs" style="left:226.5px;top:34.8px;width:1px;height:27.7px;background:#8cc9c6"></div><div class="abs" style="left:332.3px;top:34.8px;width:1px;height:27.7px;background:#8cc9c6"></div><div class="abs" style="left:438.3px;top:34.8px;width:1px;height:27.7px;background:#8cc9c6"></div><div class="abs" style="left:438.3px;top:7.5px;width:1px;height:27.3px;background:#8cc9c6"></div><div class="abs" style="left:14.0px;top:13.5px;width:424.8px;text-align:center;color:#fff;font-size:10px;font-weight:bold;line-height:15px">直流侧</div><div class="abs" style="left:386.8px;top:14.3px;width:40px;text-align:right;color:#e8f5f4;font-size:8.4px;line-height:12px">历史数据</div><div class="abs" style="left:14.0px;top:41.1px;width:106.8px;text-align:center;color:#fff;font-size:10px;font-weight:bold;line-height:15px">输入回路</div><div class="abs" style="left:120.8px;top:41.1px;width:106.2px;text-align:center;color:#fff;font-size:10px;font-weight:bold;line-height:15px">电压(V)</div><div class="abs" style="left:227.0px;top:41.1px;width:105.8px;text-align:center;color:#fff;font-size:10px;font-weight:bold;line-height:15px">电流(A)</div><div class="abs" style="left:332.8px;top:41.1px;width:106.0px;text-align:center;color:#fff;font-size:10px;font-weight:bold;line-height:15px">功率(kW)</div><div class="abs" style="left:14.0px;top:62.5px;width:429.8px;height:131.2px;border:1px solid #ebeef5;border-top:none;background:#fff"></div><div class="abs" style="left:14.0px;top:90.3px;width:424.8px;height:1px;background:#ebeef5"></div><div class="abs" style="left:14.0px;top:118.4px;width:424.8px;height:1px;background:#ebeef5"></div><div class="abs" style="left:14.0px;top:146.2px;width:424.8px;height:1px;background:#ebeef5"></div><div class="abs" style="left:14.0px;top:174.5px;width:424.8px;height:1px;background:#ebeef5"></div><div class="abs" style="left:14.0px;top:69.0px;width:106.8px;text-align:center;color:#222;font-size:9.8px;line-height:15px;white-space:nowrap">PV2</div><div class="abs" style="left:120.8px;top:69.0px;width:106.2px;text-align:center;color:#222;font-size:9.8px;line-height:15px;white-space:nowrap">829.6</div><div class="abs" style="left:227.0px;top:69.0px;width:105.8px;text-align:center;color:#222;font-size:9.8px;line-height:15px;white-space:nowrap">0.72</div><div class="abs" style="left:332.8px;top:69.0px;width:106.0px;text-align:center;color:#222;font-size:9.8px;line-height:15px;white-space:nowrap">0.60</div><div class="abs" style="left:14.0px;top:97.3px;width:106.8px;text-align:center;color:#222;font-size:9.8px;line-height:15px;white-space:nowrap">PV6</div><div class="abs" style="left:120.8px;top:97.3px;width:106.2px;text-align:center;color:#222;font-size:9.8px;line-height:15px;white-space:nowrap">831.5</div><div class="abs" style="left:227.0px;top:97.3px;width:105.8px;text-align:center;color:#222;font-size:9.8px;line-height:15px;white-space:nowrap">0.72</div><div class="abs" style="left:332.8px;top:97.3px;width:106.0px;text-align:center;color:#222;font-size:9.8px;line-height:15px;white-space:nowrap">0.60</div><div class="abs" style="left:14.0px;top:125.4px;width:106.8px;text-align:center;color:#222;font-size:9.8px;line-height:15px;white-space:nowrap">PV8</div><div class="abs" style="left:120.8px;top:125.4px;width:106.2px;text-align:center;color:#222;font-size:9.8px;line-height:15px;white-space:nowrap">802.7</div><div class="abs" style="left:227.0px;top:125.4px;width:105.8px;text-align:center;color:#222;font-size:9.8px;line-height:15px;white-space:nowrap">0.77</div><div class="abs" style="left:332.8px;top:125.4px;width:106.0px;text-align:center;color:#222;font-size:9.8px;line-height:15px;white-space:nowrap">0.62</div><div class="abs" style="left:14.0px;top:153.2px;width:106.8px;text-align:center;color:#222;font-size:9.8px;line-height:15px;white-space:nowrap">PV10</div><div class="abs" style="left:120.8px;top:153.2px;width:106.2px;text-align:center;color:#222;font-size:9.8px;line-height:15px;white-space:nowrap">830.6</div><div class="abs" style="left:227.0px;top:153.2px;width:105.8px;text-align:center;color:#222;font-size:9.8px;line-height:15px;white-space:nowrap">0.79</div><div class="abs" style="left:332.8px;top:153.2px;width:106.0px;text-align:center;color:#222;font-size:9.8px;line-height:15px;white-space:nowrap">0.66</div><div class="abs" style="left:14.0px;top:181.5px;width:106.8px;text-align:center;color:#222;font-size:9.8px;line-height:15px;white-space:nowrap">PV12</div><div class="abs" style="left:120.8px;top:181.5px;width:106.2px;text-align:center;color:#222;font-size:9.8px;line-height:15px;white-space:nowrap">814.4</div><div class="abs" style="left:227.0px;top:181.5px;width:105.8px;text-align:center;color:#222;font-size:9.8px;line-height:15px;white-space:nowrap">0.81</div><div class="abs" style="left:332.8px;top:181.5px;width:106.0px;text-align:center;color:#222;font-size:9.8px;line-height:15px;white-space:nowrap">0.66</div><div class="abs" style="left:120.3px;top:62.5px;width:1px;height:28.3px;background:#ebeef5"></div><div class="abs" style="left:226.5px;top:62.5px;width:1px;height:28.3px;background:#ebeef5"></div><div class="abs" style="left:332.3px;top:62.5px;width:1px;height:28.3px;background:#ebeef5"></div><div class="abs" style="left:438.3px;top:62.5px;width:1px;height:28.3px;background:#ebeef5"></div><div class="abs" style="left:120.3px;top:90.8px;width:1px;height:28.1px;background:#ebeef5"></div><div class="abs" style="left:226.5px;top:90.8px;width:1px;height:28.1px;background:#ebeef5"></div><div class="abs" style="left:332.3px;top:90.8px;width:1px;height:28.1px;background:#ebeef5"></div><div class="abs" style="left:438.3px;top:90.8px;width:1px;height:28.1px;background:#ebeef5"></div><div class="abs" style="left:120.3px;top:118.9px;width:1px;height:27.8px;background:#ebeef5"></div><div class="abs" style="left:226.5px;top:118.9px;width:1px;height:27.8px;background:#ebeef5"></div><div class="abs" style="left:332.3px;top:118.9px;width:1px;height:27.8px;background:#ebeef5"></div><div class="abs" style="left:438.3px;top:118.9px;width:1px;height:27.8px;background:#ebeef5"></div><div class="abs" style="left:120.3px;top:146.7px;width:1px;height:28.3px;background:#ebeef5"></div><div class="abs" style="left:226.5px;top:146.7px;width:1px;height:28.3px;background:#ebeef5"></div><div class="abs" style="left:332.3px;top:146.7px;width:1px;height:28.3px;background:#ebeef5"></div><div class="abs" style="left:438.3px;top:146.7px;width:1px;height:28.3px;background:#ebeef5"></div><div class="abs" style="left:120.3px;top:175.0px;width:1px;height:18.7px;background:#ebeef5"></div><div class="abs" style="left:226.5px;top:175.0px;width:1px;height:18.7px;background:#ebeef5"></div><div class="abs" style="left:332.3px;top:175.0px;width:1px;height:18.7px;background:#ebeef5"></div><div class="abs" style="left:438.3px;top:175.0px;width:1px;height:18.7px;background:#ebeef5"></div><div class="abs" style="left:439.8px;top:63.0px;width:4.0px;height:68.7px;background:#e4e4e4;border-radius:1px"></div><svg class="abs" style="left:0;top:0" width="1105" height="208"><defs><linearGradient id="ibox" x1="0" x2="1"><stop offset="0" stop-color="#d6d6d6"/><stop offset="1" stop-color="#c5c5c5"/></linearGradient></defs><rect x="508.8" y="21.3" width="96.2" height="119.4" rx="3.5" fill="url(#ibox)"/><rect x="525.1" y="83.5" width="63.3" height="33.5" rx="2.5" fill="#3b3b3b"/><rect x="547.4" y="86.5" width="20.3" height="19.8" fill="#c4c4c4" stroke="#707070" stroke-width="1.4"/><circle cx="548.8" cy="110.5" r="1.4" fill="none" stroke="#aaa" stroke-width="0.7"/><circle cx="557.2" cy="110.5" r="1.4" fill="none" stroke="#aaa" stroke-width="0.7"/><circle cx="565.5" cy="110.5" r="1.4" fill="none" stroke="#aaa" stroke-width="0.7"/><text x="524.4" y="136.3" font-size="6.2" fill="#333" text-anchor="middle" font-family="Liberation Sans">PV1</text><text x="537.9" y="136.3" font-size="6.2" fill="#333" text-anchor="middle" font-family="Liberation Sans">PV2</text><text x="550.6" y="136.3" font-size="6.2" fill="#333" text-anchor="middle" font-family="Liberation Sans">PV3</text><text x="567.5" y="136.3" font-size="6.2" fill="#333" font-family="Liberation Sans" textLength="30.3" lengthAdjust="spacingAndGlyphs">L1L2L3 NPE</text><rect x="519.9" y="138.7" width="3.2" height="8" rx="1.5" fill="#fff" stroke="#555" stroke-width="0.6"/><rect x="525.9" y="138.7" width="3.2" height="8" rx="1.5" fill="#fff" stroke="#555" stroke-width="0.6"/><rect x="532.9" y="138.7" width="3.2" height="8" rx="1.5" fill="#fff" stroke="#555" stroke-width="0.6"/><rect x="538.9" y="138.7" width="3.2" height="8" rx="1.5" fill="#fff" stroke="#555" stroke-width="0.6"/><rect x="546.9" y="138.7" width="3.2" height="8" rx="1.5" fill="#fff" stroke="#555" stroke-width="0.6"/><rect x="552.9" y="138.7" width="3.2" height="8" rx="1.5" fill="#fff" stroke="#555" stroke-width="0.6"/><rect x="567.1" y="141.3" width="30.3" height="6.9" fill="#111"/><circle cx="570.1" cy="144.7" r="1.3" fill="#999"/><circle cx="576.1" cy="144.7" r="1.3" fill="#999"/><circle cx="582.2" cy="144.7" r="1.3" fill="#999"/><circle cx="588.2" cy="144.7" r="1.3" fill="#999"/><circle cx="594.3" cy="144.7" r="1.3" fill="#999"/><path d="M444.9 153.39999999999998 H522.1 V146.5" fill="none" stroke="#c8c8c8" stroke-width="1.3" transform="translate(0.9,0.9)"/><path d="M444.9 153.39999999999998 H522.1 V146.5" fill="none" stroke="#555" stroke-width="0.9"/><path d="M444.9 158.10000000000002 H527.5 V146.5" fill="none" stroke="#c8c8c8" stroke-width="1.3" transform="translate(0.9,0.9)"/><path d="M444.9 158.10000000000002 H527.5 V146.5" fill="none" stroke="#555" stroke-width="0.9"/><path d="M588.7 148.20000000000005 V153.39999999999998 H659.5" fill="none" stroke="#c8c8c8" stroke-width="1.3" transform="translate(0.9,0.9)"/><path d="M588.7 148.20000000000005 V153.39999999999998 H659.5" fill="none" stroke="#555" stroke-width="0.9"/><path d="M582.9 148.20000000000005 V158.10000000000002 H659.5" fill="none" stroke="#c8c8c8" stroke-width="1.3" transform="translate(0.9,0.9)"/><path d="M582.9 148.20000000000005 V158.10000000000002 H659.5" fill="none" stroke="#555" stroke-width="0.9"/><path d="M462.2 150.1 l6.3 3.3 l-6.3 3.3z" fill="#111"/><path d="M482.2 154.8 l6.3 3.3 l-6.3 3.3z" fill="#111"/><path d="M621.0 150.1 l6.3 3.3 l-6.3 3.3z" fill="#111"/><path d="M641.0 154.8 l6.3 3.3 l-6.3 3.3z" fill="#111"/></svg><div class="abs" style="left:660.3px;top:7.5px;width:430.0px;height:55.0px;background:#4fa8a5"></div><div class="abs" style="left:660.3px;top:34.3px;width:430.0px;height:1px;background:#8cc9c6"></div><div class="abs" style="left:765.2px;top:34.8px;width:1px;height:27.7px;background:#8cc9c6"></div><div class="abs" style="left:872.3px;top:34.8px;width:1px;height:27.7px;background:#8cc9c6"></div><div class="abs" style="left:978.7px;top:34.8px;width:1px;height:27.7px;background:#8cc9c6"></div><div class="abs" style="left:1084.6px;top:34.8px;width:1px;height:27.7px;background:#8cc9c6"></div><div class="abs" style="left:1084.6px;top:7.5px;width:1px;height:27.3px;background:#8cc9c6"></div><div class="abs" style="left:660.3px;top:13.5px;width:424.8px;text-align:center;color:#fff;font-size:10px;font-weight:bold;line-height:15px">交流侧</div><div class="abs" style="left:1033.1px;top:14.3px;width:40px;text-align:right;color:#e8f5f4;font-size:8.4px;line-height:12px">历史数据</div><div class="abs" style="left:660.3px;top:41.1px;width:105.4px;text-align:center;color:#fff;font-size:10px;font-weight:bold;line-height:15px">参数</div><div class="abs" style="left:765.7px;top:41.1px;width:107.1px;text-align:center;color:#fff;font-size:10px;font-weight:bold;line-height:15px">A相</div><div class="abs" style="left:872.8px;top:41.1px;width:106.4px;text-align:center;color:#fff;font-size:10px;font-weight:bold;line-height:15px">B相</div><div class="abs" style="left:979.2px;top:41.1px;width:105.9px;text-align:center;color:#fff;font-size:10px;font-weight:bold;line-height:15px">C相</div><div class="abs" style="left:660.3px;top:62.5px;width:430.0px;height:131.2px;border:1px solid #ebeef5;border-top:none;background:#fff"></div><div class="abs" style="left:660.3px;top:90.3px;width:424.8px;height:1px;background:#ebeef5"></div><div class="abs" style="left:660.3px;top:118.4px;width:424.8px;height:1px;background:#ebeef5"></div><div class="abs" style="left:660.3px;top:146.2px;width:424.8px;height:1px;background:#ebeef5"></div><div class="abs" style="left:660.3px;top:174.5px;width:424.8px;height:1px;background:#ebeef5"></div><div class="abs" style="left:660.3px;top:69.0px;width:105.4px;text-align:center;color:#222;font-size:9.8px;line-height:15px;white-space:nowrap">电压(V)</div><div class="abs" style="left:765.7px;top:69.0px;width:107.1px;text-align:center;color:#222;font-size:9.8px;line-height:15px;white-space:nowrap">235.6</div><div class="abs" style="left:872.8px;top:69.0px;width:106.4px;text-align:center;color:#222;font-size:9.8px;line-height:15px;white-space:nowrap">235.6</div><div class="abs" style="left:979.2px;top:69.0px;width:105.9px;text-align:center;color:#222;font-size:9.8px;line-height:15px;white-space:nowrap">236.2</div><div class="abs" style="left:660.3px;top:97.3px;width:105.4px;text-align:center;color:#222;font-size:9.8px;line-height:15px;white-space:nowrap">电流(A)</div><div class="abs" style="left:765.7px;top:97.3px;width:107.1px;text-align:center;color:#222;font-size:9.8px;line-height:15px;white-space:nowrap">9.57</div><div class="abs" style="left:872.8px;top:97.3px;width:106.4px;text-align:center;color:#222;font-size:9.8px;line-height:15px;white-space:nowrap">9.33</div><div class="abs" style="left:979.2px;top:97.3px;width:105.9px;text-align:center;color:#222;font-size:9.8px;line-height:15px;white-space:nowrap">9.21</div><div class="abs" style="left:660.3px;top:125.4px;width:105.4px;text-align:center;color:#222;font-size:9.8px;line-height:15px;white-space:nowrap">总有功功率(kW)</div><div class="abs" style="left:765.7px;top:125.4px;width:319.4px;text-align:center;color:#222;font-size:9.8px;line-height:15px;white-space:nowrap">6.57</div><div class="abs" style="left:660.3px;top:153.2px;width:105.4px;text-align:center;color:#222;font-size:9.8px;line-height:15px;white-space:nowrap">功率因数</div><div class="abs" style="left:765.7px;top:153.2px;width:319.4px;text-align:center;color:#222;font-size:9.8px;line-height:15px;white-space:nowrap">1</div><div class="abs" style="left:660.3px;top:181.5px;width:105.4px;text-align:center;color:#222;font-size:9.8px;line-height:15px;white-space:nowrap">频率(Hz)</div><div class="abs" style="left:765.7px;top:181.5px;width:319.4px;text-align:center;color:#222;font-size:9.8px;line-height:15px;white-space:nowrap">50</div><div class="abs" style="left:765.2px;top:62.5px;width:1px;height:28.3px;background:#ebeef5"></div><div class="abs" style="left:872.3px;top:62.5px;width:1px;height:28.3px;background:#ebeef5"></div><div class="abs" style="left:978.7px;top:62.5px;width:1px;height:28.3px;background:#ebeef5"></div><div class="abs" style="left:1084.6px;top:62.5px;width:1px;height:28.3px;background:#ebeef5"></div><div class="abs" style="left:765.2px;top:90.8px;width:1px;height:28.1px;background:#ebeef5"></div><div class="abs" style="left:872.3px;top:90.8px;width:1px;height:28.1px;background:#ebeef5"></div><div class="abs" style="left:978.7px;top:90.8px;width:1px;height:28.1px;background:#ebeef5"></div><div class="abs" style="left:1084.6px;top:90.8px;width:1px;height:28.1px;background:#ebeef5"></div><div class="abs" style="left:765.2px;top:118.9px;width:1px;height:27.8px;background:#ebeef5"></div><div class="abs" style="left:1084.6px;top:118.9px;width:1px;height:27.8px;background:#ebeef5"></div><div class="abs" style="left:765.2px;top:146.7px;width:1px;height:28.3px;background:#ebeef5"></div><div class="abs" style="left:1084.6px;top:146.7px;width:1px;height:28.3px;background:#ebeef5"></div><div class="abs" style="left:765.2px;top:175.0px;width:1px;height:18.7px;background:#ebeef5"></div><div class="abs" style="left:1084.6px;top:175.0px;width:1px;height:18.7px;background:#ebeef5"></div><div class="abs" style="left:1086.1px;top:63.0px;width:4.2px;height:122.7px;background:#e4e4e4;border-radius:1px"></div><div class="abs" style="left:1084.5px;top:76.3px;width:20px;height:18px;background:#fff"></div><svg class="abs" style="left:1087.0px;top:80.0px" width="11" height="10" viewBox="0 0 11 10"><g stroke="#111" stroke-width="0.9"><path d="M0.5 1.7 h10 M0.5 4.9 h10 M0.5 8 h10"/></g><g fill="#111"><path d="M2.6 .2 l1.8 1.5 l-1.8 1.5z"/><path d="M7 3.4 l1.8 1.5 l-1.8 1.5z"/><path d="M4.6 6.5 l-1.8 1.5 l1.8 1.5z"/></g></svg></div>
<div class="abs" style="left:0;top:695px;width:1267px;height:2px;background:#cfe8ea"></div>
</div>
</body></html>
